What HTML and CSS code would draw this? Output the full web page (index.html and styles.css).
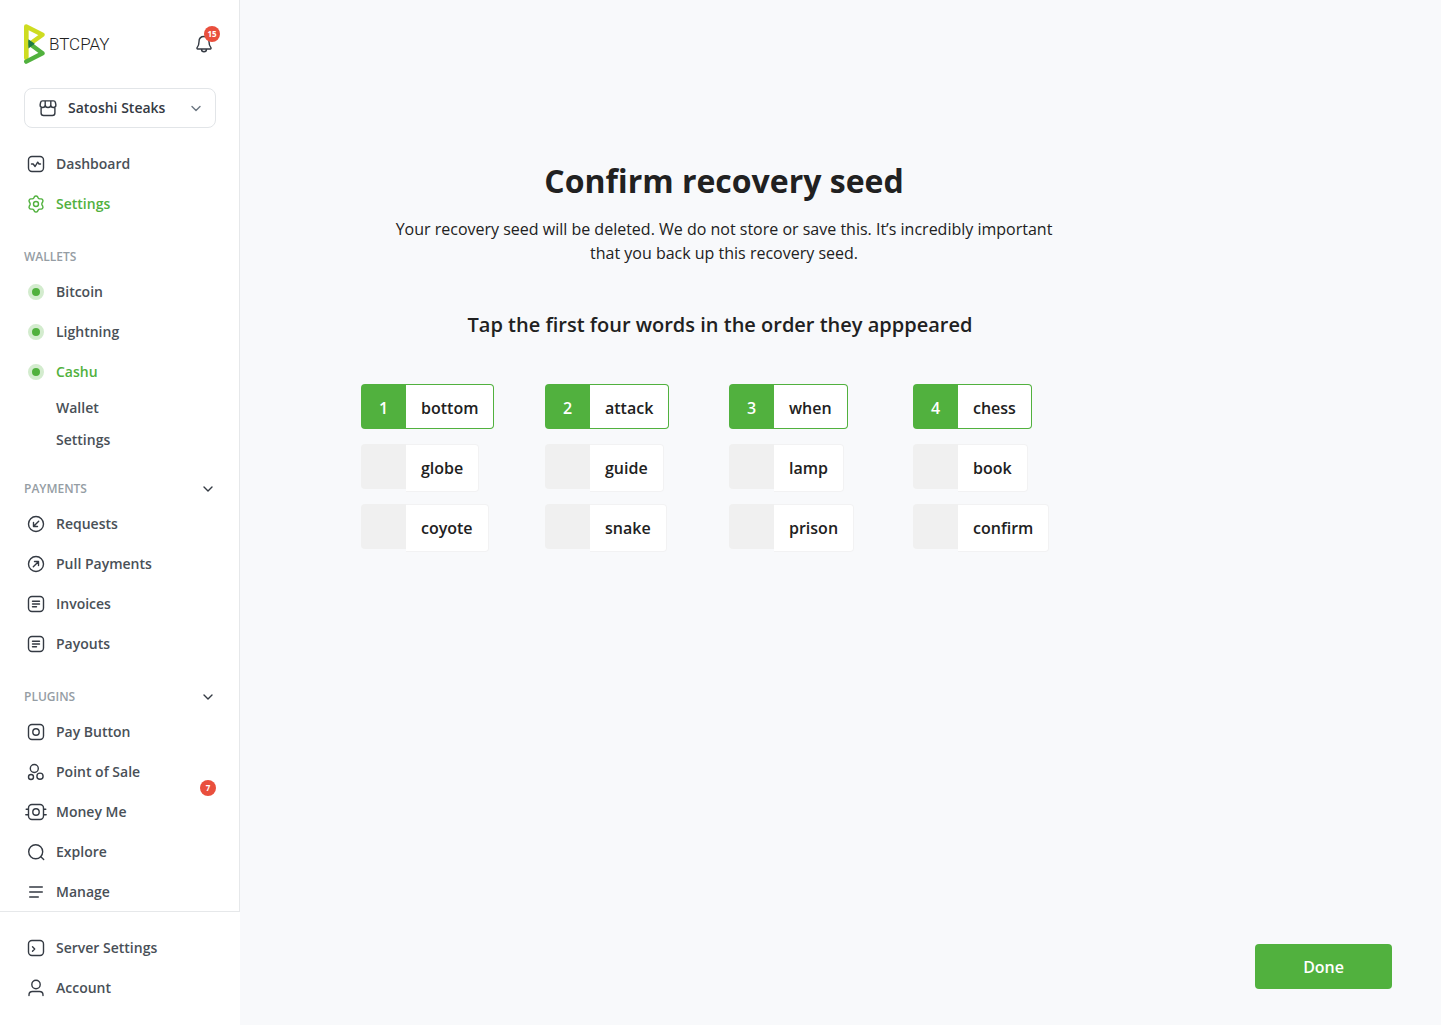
FILE: index.html
```html
<!DOCTYPE html>
<html lang="en">
<head>
<meta charset="utf-8">
<meta name="viewport" content="width=device-width, initial-scale=1">
<title>BTCPay – Confirm recovery seed</title>
<link rel="stylesheet" href="styles.css">
</head>
<body>
<div class="app">
  <aside class="sidebar">
    <div class="sidebar-main">
      <header class="brand-row">
        <a class="brand" href="#">
          <svg class="brand-mark" width="21" height="40" viewBox="0 0 21 40" fill="none" stroke-width="4.400" stroke-linecap="round" stroke-linejoin="round" aria-hidden="true">
            <path d="M2.200 34V2.500l16.300 8.200L5 20.500" stroke="#cedc21"/>
            <path d="M2.200 37.600 18.500 29.200 4 18.500" stroke="#51b13e"/>
            <path d="M0 5v29h4.400V5z" fill="#cedc21"/>
            <path d="M4.400 15.300 10.800 19.800 4.400 24.500z" fill="#1e7a44"/>
          </svg>
          <span class="brand-name">BTCPAY</span>
        </a>
        <button class="bell" type="button" aria-label="Notifications">
          <svg class="icon" viewBox="0 0 24 24"><path d="M12 4.500c-3.200 0-5 2.200-5 5.200 0 3.600-.8 4.600-1.900 6-.4.600-.1 1.300.6 1.300h12.600c.7 0 1-.7.600-1.300-1.100-1.400-1.900-2.400-1.900-6 0-3-1.800-5.200-5-5.200zM9.500 17.200a2.500 2.500 0 0 0 5 0"/></svg>
          <span class="badge bell-badge">15</span>
        </button>
      </header>

      <button class="store" type="button">
        <svg class="icon" viewBox="0 0 24 24"><path d="M5.100 11.300V17a2.500 2.500 0 0 0 2.500 2.500h8.800a2.500 2.500 0 0 0 2.500-2.500v-5.700M6.500 4.900h11c1.100 0 1.700.6 1.900 1.600l.5 2.500c0 1.500-1 2.500-2.500 2.500S14.800 10.500 14.800 9c0 1.500-1.300 2.500-2.800 2.500S9.200 10.500 9.200 9c0 1.500-1.100 2.500-2.600 2.500S4.100 10.500 4.100 9l.5-2.500c.2-1 .8-1.600 1.900-1.600zM9.200 9V4.900M14.800 9V4.900"/></svg>
        <span class="store-name">Satoshi Steaks</span>
        <svg class="chevron" viewBox="0 0 16 16"><path d="m4 6.500 4 4 4-4"/></svg>
      </button>

      <nav class="nav">
        <a class="nav-link" href="#"><svg class="icon" viewBox="0 0 24 24"><rect x="4.500" y="4.500" width="15" height="15" rx="3.500"/><path d="M7.500 12h1.700l1.900 2.500 2.600-4.300L15 12h1.500"/></svg>Dashboard</a>
        <a class="nav-link active" href="#"><svg class="icon" viewBox="0 0 24 24"><path d="M10.500 4.700c.5-.9 2.500-.9 3 0l.8 1.500c.3.500.8.700 1.400.7h1.500c1.200 0 2.200 1.700 1.600 2.700l-.8 1.500c-.3.600-.3 1.200 0 1.800l.8 1.500c.6 1-.4 2.700-1.600 2.700h-1.500c-.6 0-1.100.2-1.400.7l-.8 1.500c-.5.900-2.500.9-3 0l-.8-1.500c-.3-.5-.8-.7-1.400-.7H6.800c-1.200 0-2.200-1.700-1.600-2.700l.8-1.500c.3-.6.300-1.200 0-1.800l-.8-1.500c-.6-1 .4-2.700 1.600-2.700h1.500c.6 0 1.100-.2 1.400-.7z"/><circle cx="12" cy="12" r="2.500"/></svg>Settings</a>

        <h2 class="nav-title">Wallets</h2>
        <a class="nav-link" href="#"><span class="status"></span>Bitcoin</a>
        <a class="nav-link" href="#"><span class="status"></span>Lightning</a>
        <a class="nav-link active" href="#"><span class="status"></span>Cashu</a>
        <a class="nav-link sub" href="#">Wallet</a>
        <a class="nav-link sub" href="#">Settings</a>

        <h2 class="nav-title">Payments <svg class="chevron" viewBox="0 0 16 16"><path d="m4 6 4 4 4-4"/></svg></h2>
        <a class="nav-link" href="#"><svg class="icon" viewBox="0 0 24 24"><circle cx="12" cy="12" r="7.500"/><path d="m14.700 9.300-5 5M9.500 10.500v4h4"/></svg>Requests</a>
        <a class="nav-link" href="#"><svg class="icon" viewBox="0 0 24 24"><circle cx="12" cy="12" r="7.500"/><path d="m9.300 14.700 5-5M10.500 9.500h4v4"/></svg>Pull Payments</a>
        <a class="nav-link" href="#"><svg class="icon" viewBox="0 0 24 24"><rect x="4.500" y="4.500" width="15" height="15" rx="3.500"/><path d="M8.500 9.300h7M8.500 12h7M8.500 14.700h4"/></svg>Invoices</a>
        <a class="nav-link" href="#"><svg class="icon" viewBox="0 0 24 24"><rect x="4.500" y="4.500" width="15" height="15" rx="3.500"/><path d="M8.500 9.300h7M8.500 12h7M8.500 14.700h4"/></svg>Payouts</a>

        <h2 class="nav-title">Plugins <svg class="chevron" viewBox="0 0 16 16"><path d="m4 6 4 4 4-4"/></svg></h2>
        <a class="nav-link" href="#"><svg class="icon" viewBox="0 0 24 24"><rect x="4.500" y="4.500" width="15" height="15" rx="3.500"/><circle cx="12" cy="12" r="3.200"/></svg>Pay Button</a>
        <a class="nav-link" href="#"><svg class="icon" viewBox="0 0 24 24"><circle cx="10.300" cy="8.500" r="4"/><circle cx="7" cy="17" r="2.500"/><circle cx="16" cy="16.200" r="3.100"/></svg>Point of Sale</a>
        <a class="nav-link" href="#"><svg class="icon" viewBox="0 0 24 24"><rect x="4.500" y="4.500" width="15" height="15" rx="3.500"/><circle cx="12" cy="12" r="3.200"/><path d="M2.200 9.200h2M1.800 14.800h2.400M19.800 9.200h2M19.800 14.800h2.400"/></svg>Money Me<span class="badge nav-badge">7</span></a>
        <a class="nav-link" href="#"><svg class="icon" viewBox="0 0 24 24"><circle cx="11.700" cy="11.700" r="7"/><path d="m16.800 16.800 2.900 2.700"/></svg>Explore</a>
        <a class="nav-link" href="#"><svg class="icon" viewBox="0 0 24 24"><path d="M5.700 7h12.600M5.700 12h12.600M5.700 17h8.600"/></svg>Manage</a>
      </nav>
    </div>

    <nav class="sidebar-foot">
      <a class="nav-link" href="#"><svg class="icon" viewBox="0 0 24 24"><rect x="4.500" y="4.500" width="15" height="15" rx="3.500"/><path d="m8.500 10.800 2.200 2.200-2.200 2.200"/></svg>Server Settings</a>
      <a class="nav-link" href="#"><svg class="icon" viewBox="0 0 24 24"><circle cx="12" cy="8.500" r="4.200"/><path d="M5 19.500v-.6c0-2 1.600-3.400 3.500-3.400h7c1.900 0 3.500 1.400 3.500 3.400v.6"/></svg>Account</a>
    </nav>
  </aside>

  <main class="main">
    <section class="content">
      <h1 class="title">Confirm recovery seed</h1>
      <p class="intro">Your recovery seed will be deleted. We do not store or save this. It’s incredibly important that you back up this recovery seed.</p>
      <h2 class="prompt">Tap the first four words in the order they apppeared</h2>
      <div class="words">
        <button class="word chosen" type="button" aria-pressed="true"><span class="order">1</span><span class="text">bottom</span></button>
        <button class="word chosen" type="button" aria-pressed="true"><span class="order">2</span><span class="text">attack</span></button>
        <button class="word chosen" type="button" aria-pressed="true"><span class="order">3</span><span class="text">when</span></button>
        <button class="word chosen" type="button" aria-pressed="true"><span class="order">4</span><span class="text">chess</span></button>
        <button class="word" type="button" aria-pressed="false"><span class="order"></span><span class="text">globe</span></button>
        <button class="word" type="button" aria-pressed="false"><span class="order"></span><span class="text">guide</span></button>
        <button class="word" type="button" aria-pressed="false"><span class="order"></span><span class="text">lamp</span></button>
        <button class="word" type="button" aria-pressed="false"><span class="order"></span><span class="text">book</span></button>
        <button class="word" type="button" aria-pressed="false"><span class="order"></span><span class="text">coyote</span></button>
        <button class="word" type="button" aria-pressed="false"><span class="order"></span><span class="text">snake</span></button>
        <button class="word" type="button" aria-pressed="false"><span class="order"></span><span class="text">prison</span></button>
        <button class="word" type="button" aria-pressed="false"><span class="order"></span><span class="text">confirm</span></button>
      </div>
    </section>
    <button class="done" type="button">Done</button>
  </main>
</div>
</body>
</html>
```
FILE: styles.css
```css
* {
  box-sizing: border-box;
}

body {
  margin: 0;
  font-family: "Open Sans", "Noto Sans", sans-serif;
  font-size: 16px;
  line-height: 24px;
  color: #212121;
  background: #f8f9fb;
}

button {
  font: inherit;
  color: inherit;
  border: 0;
  padding: 0;
  background: none;
  cursor: pointer;
}

a {
  color: inherit;
  text-decoration: none;
}

.app {
  display: flex;
  min-height: 100vh;
}

/* Sidebar */
.sidebar {
  display: flex;
  flex: 0 0 240px;
  flex-direction: column;
  background: #fff;
}

.sidebar-main {
  padding: 24px 23px 0 24px;
  border-right: 1px solid #e6e8ea;
}

.sidebar-foot {
  margin-top: -1px;
  padding: 16px 24px;
  border-top: 1px solid #e6e8ea;
}

.brand-row {
  display: flex;
  align-items: center;
  justify-content: space-between;
  height: 40px;
}

.brand {
  display: flex;
  align-items: center;
  gap: 4px;
}

.brand-name {
  font-family: Roboto, sans-serif;
  font-size: 17px;
  font-weight: 300;
}

.bell {
  position: relative;
  height: 24px;
}

.badge {
  position: absolute;
  width: 16px;
  height: 16px;
  border-radius: 50%;
  background: #e94f3d;
  color: #fff;
  font-size: 8px;
  font-weight: 700;
  line-height: 16px;
  text-align: center;
}

.bell-badge {
  top: -6px;
  right: -4px;
}

.nav-badge {
  top: -12px;
  right: 0;
}

.icon,
.chevron {
  flex: none;
  display: block;
  width: 24px;
  height: 24px;
  fill: none;
  stroke: #343a43;
  stroke-width: 1.4px;
  stroke-linecap: round;
  stroke-linejoin: round;
}

.chevron {
  width: 16px;
  height: 16px;
}

.store {
  display: flex;
  align-items: center;
  width: 100%;
  height: 40px;
  margin: 24px 0 16px;
  padding: 0 11px;
  border: 1px solid #e2e5e8;
  border-radius: 8px;
  color: #343a43;
  font-size: 14px;
  font-weight: 600;
}

.store-name {
  flex: 1;
  padding-left: 8px;
  text-align: left;
}

.store .chevron {
  stroke: #6b7682;
}

.nav-link {
  position: relative;
  display: flex;
  align-items: center;
  gap: 8px;
  height: 40px;
  color: #495057;
  font-size: 14px;
  font-weight: 600;
}

.nav-link.active {
  color: #51b13e;
}

.nav-link.active .icon {
  stroke: #51b13e;
}

.nav-link.sub {
  height: 32px;
  padding-left: 32px;
}

.nav-title {
  display: flex;
  align-items: center;
  justify-content: space-between;
  margin: 0;
  padding: 24px 0 6px;
  color: #959da4;
  font-size: 12px;
  font-weight: 600;
  line-height: 18px;
  text-transform: uppercase;
}

.status {
  width: 16px;
  height: 16px;
  margin: 0 4px;
  border: 4px solid #d3ecce;
  border-radius: 50%;
  background: #51b13e;
}

/* Main area */
.main {
  display: flex;
  flex: 1;
  flex-direction: column;
  padding: 161px 49px 36px 121px;
}

.content {
  max-width: 726px;
}

.title {
  margin: 0;
  font-size: 32px;
  font-weight: 700;
  line-height: 40px;
  text-align: center;
}

.intro {
  max-width: 664px;
  margin: 16px auto 46px;
  text-align: center;
}

.prompt {
  max-width: 718px;
  margin: 0 0 45px;
  font-size: 20px;
  font-weight: 600;
  line-height: 28px;
  text-align: center;
}

.words {
  display: grid;
  grid-template-columns: repeat(4, 160px);
  grid-auto-rows: 48px;
  gap: 12px 24px;
}

.word {
  display: flex;
  align-items: flex-start;
  justify-self: start;
  font-weight: 600;
}

.order {
  width: 45px;
  height: 45px;
  border-radius: 4px 0 0 4px;
  background: #f0f0f0;
  color: #fff;
  line-height: 48px;
}

.text {
  height: 48px;
  padding: 0 15px;
  border: 1px solid #f2f2f3;
  border-left: 0;
  border-radius: 0 4px 4px 0;
  background: #fff;
  line-height: 47px;
}

.chosen .order {
  background: #51b13e;
}

.chosen .text {
  height: 45px;
  border-color: #51b13e;
}

.done {
  align-self: flex-end;
  height: 45px;
  margin-top: auto;
  padding: 0 48px;
  border-radius: 4px;
  background: #51b13e;
  color: #fff;
  font-weight: 600;
}
```
